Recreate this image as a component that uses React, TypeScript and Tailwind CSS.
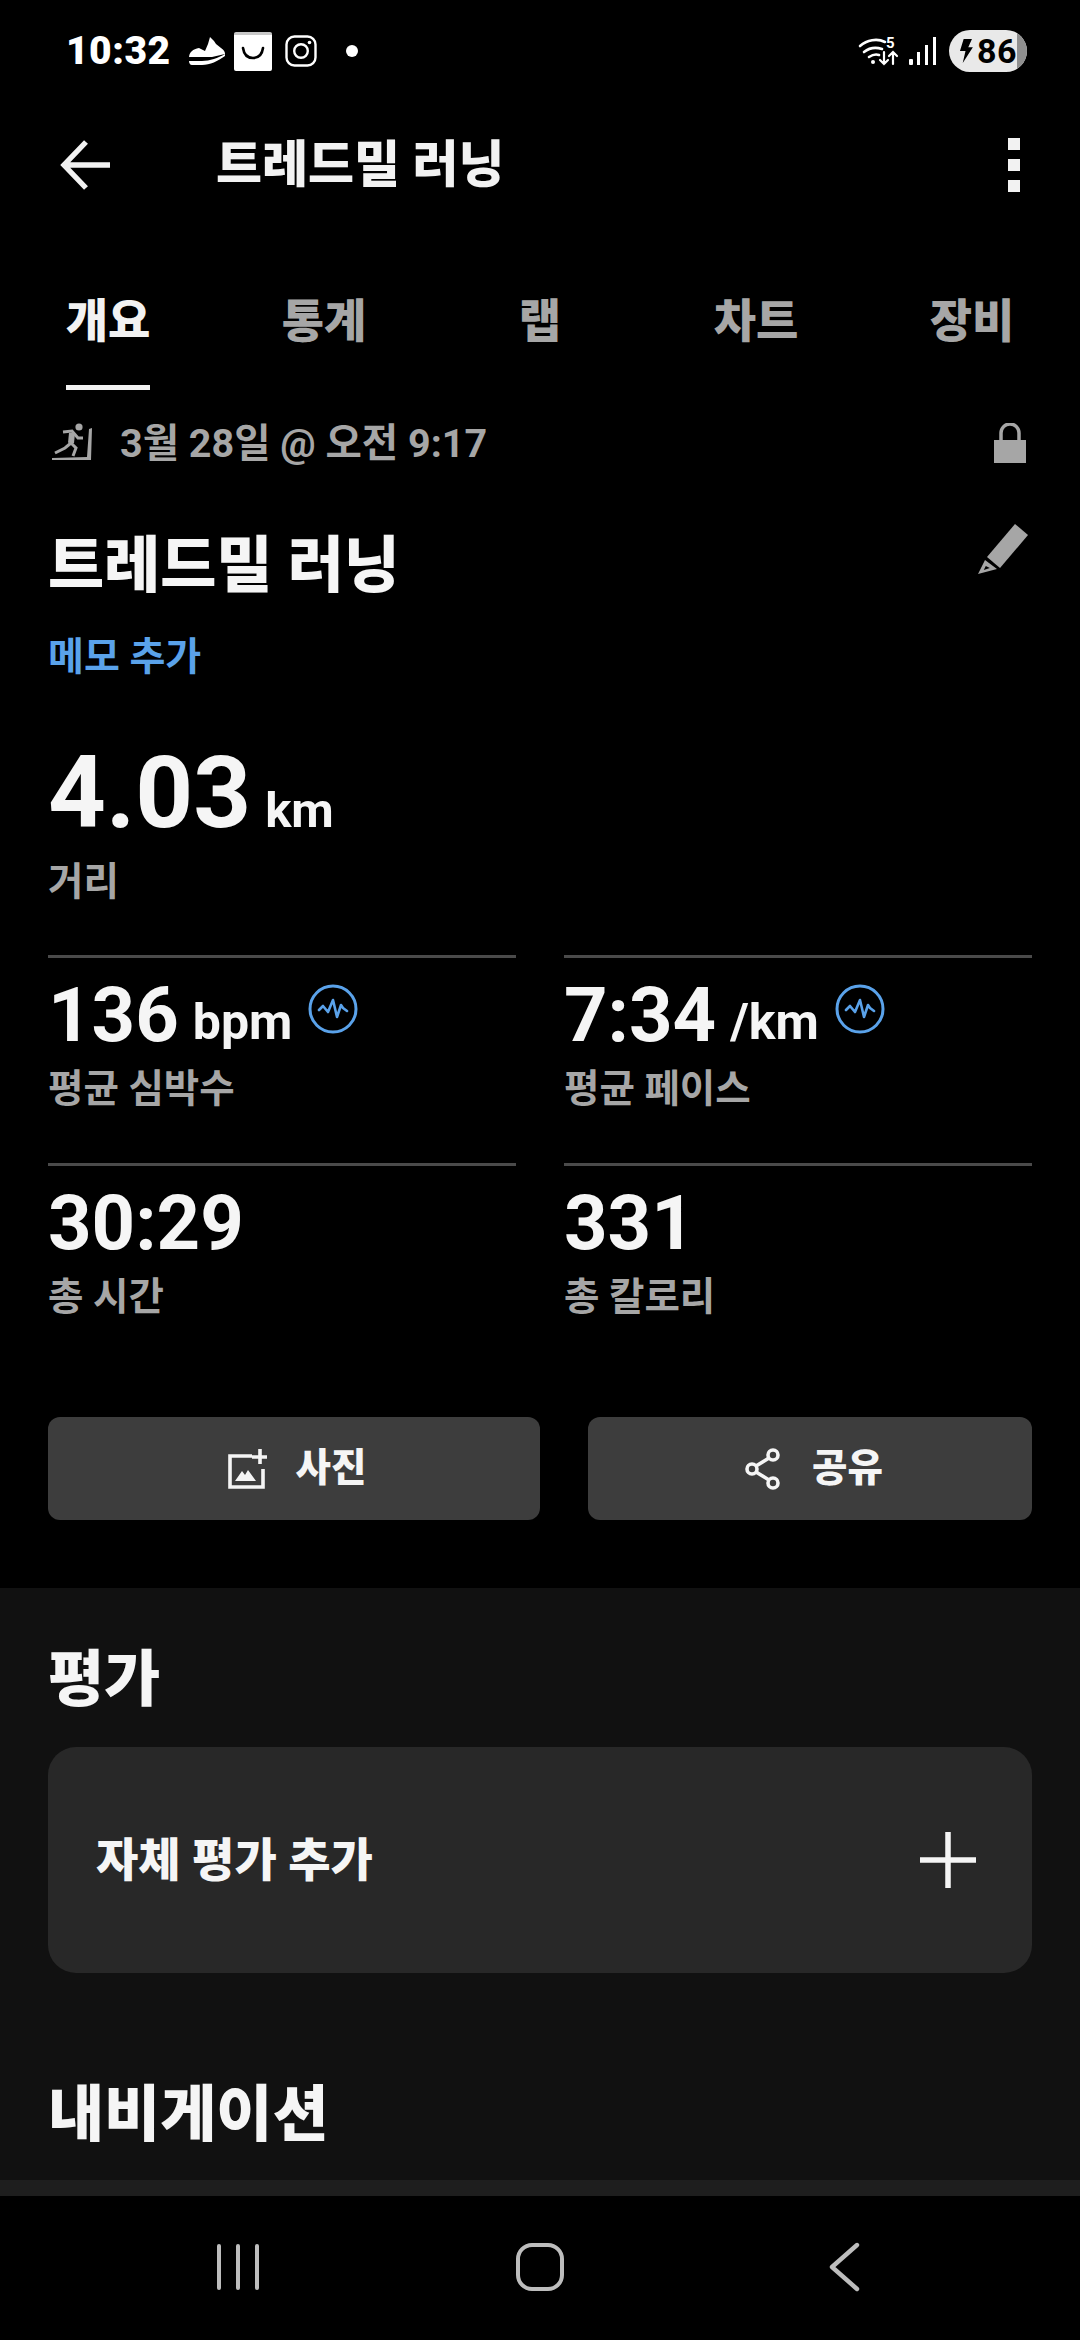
const PulseBadge = () => (
  <svg viewBox="0 0 50 50" className="w-[50px] h-[50px] ml-4 mt-[-12px] shrink-0" fill="none" stroke="#5aa2ea">
    <circle cx="25" cy="25" r="23" strokeWidth="3" />
    <path d="M11 26l4-4 5 6 5-12 4 17 4-12 2 3 4 3" strokeWidth="2.6" strokeLinejoin="round" strokeLinecap="round" />
  </svg>
);

function StatusBar() {
  return (
    <div className="h-[102px] shrink-0 flex items-center justify-between pl-[66px] pr-[53px]">
      <div className="flex items-center">
        <span className="w-[104px] text-[39px] font-black text-white leading-none tracking-[0.5px]">10:32</span>
        <svg viewBox="0 0 38 32" className="w-[38px] h-[32px] ml-[18px]" fill="#fff">
          <path d="M1 23C1 17 5 14 11 13l6 3 3-7 2-7 4 4 2 3 5 4c3 2 4 4 4 6l-13 3H1z" />
          <path d="M1 26h13c8 0 16-3 23-7v2c-7 5-15 9-23 9H4c-2 0-3-2-3-4z" />
        </svg>
        <div className="w-[38px] h-[39px] ml-2 bg-white rounded-[2px] border-t-[3px] border-[#c8c8c8]">
          <svg viewBox="0 0 38 36" className="w-[38px] h-[36px]" fill="none" stroke="#000" strokeWidth="2.6" strokeLinecap="round">
            <path d="M9 13c1 7 5 10 10 10s9-3 10-10" />
          </svg>
        </div>
        <svg viewBox="0 0 32 32" className="w-[32px] h-[32px] ml-[13px]" fill="none" stroke="#fff" strokeWidth="2.4">
          <rect x="1.5" y="1.5" width="29" height="29" rx="8" />
          <circle cx="16" cy="16" r="6.8" />
          <circle cx="24.5" cy="7.5" r="1.8" fill="#fff" stroke="none" />
        </svg>
        <span className="w-3 h-3 rounded-full bg-white ml-[29px]" />
      </div>
      <div className="flex items-center">
        <div className="relative w-[44px] h-[30px]">
          <svg viewBox="0 0 44 30" className="w-[44px] h-[30px]" fill="none" stroke="#fff" strokeWidth="2.6" strokeLinecap="round">
            <path d="M2 10c7-6 17-8 25-4M6 16c5-4 12-5 18-3M11 21c3-2 7-3 10-2" />
            <circle cx="15" cy="26" r="2" fill="#fff" stroke="none" />
            <path d="M26 16v12m-4-4l4 4 4-4M35 28V16m-4 4l4-4 4 4" strokeWidth="2.2" />
          </svg>
          <span className="absolute left-[28px] top-[0px] text-[15px] leading-[14px] font-bold text-white">5</span>
        </div>
        <svg viewBox="0 0 28 28" className="w-[28px] h-[28px] ml-[7px]" fill="#fff">
          <rect x="0" y="22" width="4" height="6" rx="1" />
          <rect x="8" y="15" width="3" height="13" />
          <rect x="16" y="8" width="3" height="20" />
          <rect x="24" y="0" width="3" height="28" />
        </svg>
        <div className="relative w-[78px] h-[42px] ml-[12px] rounded-full overflow-hidden bg-[#e9e9e9] flex items-center pl-[9px]">
          <svg viewBox="0 0 16 26" className="w-[15px] h-[24px] shrink-0" fill="#000">
            <path d="M6 0h9l-4 9h5L5 26l3-13H2z" />
          </svg>
          <span className="ml-[4px] text-[34px] leading-none font-bold text-black tracking-[0.5px]">86</span>
          <div className="absolute right-0 top-0 bottom-0 w-[10px] bg-[#8f8f8f]" />
        </div>
      </div>
    </div>
  );
}

function Header() {
  return (
    <div className="h-[126px] shrink-0 flex items-center pl-[60px] pr-[60px]">
      <svg viewBox="0 0 50 50" className="w-[50px] h-[50px] shrink-0" fill="none" stroke="#f2f2f2" strokeWidth="5.4">
        <path d="M50 25H4M26 2L4 25l22 23" />
      </svg>
      <span className="ml-[106px] text-[50px] font-black text-[#f2f2f2] leading-none">트레드밀 러닝</span>
      <div className="ml-auto flex flex-col gap-[9px]">
        <span className="w-3 h-3 bg-[#f2f2f2]" />
        <span className="w-3 h-3 bg-[#f2f2f2]" />
        <span className="w-3 h-3 bg-[#f2f2f2]" />
      </div>
    </div>
  );
}

function Tabs() {
  const tabs = ['개요', '통계', '랩', '차트', '장비'];
  return (
    <div className="h-[162px] shrink-0 grid grid-cols-5">
      {tabs.map((t, i) => (
        <div key={t} className="flex flex-col items-center justify-end">
          <span className={`text-[46px] font-black leading-none mb-[41px] ${i === 0 ? 'text-[#f2f2f2]' : 'text-[#a6a6a6]'}`}>{t}</span>
          <div className={`w-[84px] h-[5px] ${i === 0 ? 'bg-[#f2f2f2]' : ''}`} />
        </div>
      ))}
    </div>
  );
}

function Stat({ value, unit, label, pulse }: { value: string; unit?: string; label: string; pulse?: boolean }) {
  return (
    <div className="border-t-[3px] border-[#4a4a4a] pt-[17px] h-[208px]">
      <div className="flex items-center h-[80px]">
        <span className="text-[76px] font-bold text-[#f5f5f5] leading-none">{value}</span>
        {unit && <span className="ml-[14px] mt-[14px] text-[50px] font-bold text-[#f5f5f5] leading-none">{unit}</span>}
        {pulse && <PulseBadge />}
      </div>
      <div className="mt-[11px] text-[38.5px] font-bold text-[#a6a6a6] leading-[46px]">{label}</div>
    </div>
  );
}

function Summary() {
  return (
    <div className="h-[1198px] shrink-0 px-[48px]">
      <div className="h-[106px] flex items-center">
        <svg viewBox="0 0 40 40" className="w-[40px] h-[40px] ml-[4px] shrink-0" fill="#a6a6a6" stroke="#a6a6a6">
          <circle cx="27" cy="4" r="3.6" stroke="none" />
          <path d="M20 10l-1 10" strokeWidth="6" />
          <path d="M11 9l9-1 6 7 5 0M19 20l-6 5-10 5M19 20l5 5-3 8" fill="none" strokeWidth="3" />
          <path d="M0 35l35-1 2-28 3-1-1 32H0z" stroke="none" />
        </svg>
        <span className="ml-[28px] pt-[2px] text-[39.5px] font-bold text-[#a6a6a6] leading-none">3월 28일 @ 오전 9:17</span>
        <svg viewBox="0 0 32 40" className="ml-auto mr-[6px] w-[32px] h-[40px] shrink-0" fill="#a6a6a6">
          <path d="M0 17h32v23H0z" />
          <path d="M7 17V10a9 9 0 0118 0v7" fill="none" stroke="#a6a6a6" strokeWidth="3.5" />
        </svg>
      </div>
      <div className="h-[128px] flex items-center justify-between">
        <span className="pt-[12px] text-[61px] font-black text-[#f5f5f5] leading-none">트레드밀 러닝</span>
        <svg viewBox="0 0 50 50" className="w-[50px] h-[50px] mr-[4px] mb-[22px] shrink-0" fill="#a6a6a6">
          <path d="M37 0l13 11-28 33L9 33z" />
          <path d="M7 36l12 9-19 5 7-14zm.8 6l-2 4 6-2z" />
        </svg>
      </div>
      <div className="mt-[10px] text-[39px] font-bold text-[#5aa2ea] leading-[46px]">메모 추가</div>
      <div className="mt-[59px] flex items-baseline h-[108px]">
        <span className="text-[101px] font-bold text-[#f5f5f5] leading-[108px]">4.03</span>
        <span className="ml-[14px] text-[49px] font-bold text-[#f5f5f5] leading-none">km</span>
      </div>
      <div className="mt-[12px] text-[38.5px] font-bold text-[#a6a6a6] leading-[46px]">거리</div>
      <div className="mt-[50px] grid grid-cols-2 gap-x-[48px]">
        <Stat value="136" unit="bpm" label="평균 심박수" pulse />
        <Stat value="7:34" unit="/km" label="평균 페이스" pulse />
        <Stat value="30:29" label="총 시간" />
        <Stat value="331" label="총 칼로리" />
      </div>
      <div className="mt-[46px] flex gap-[48px]">
        <button className="w-[492px] h-[103px] rounded-[12px] bg-[#3d3d3d] flex items-center justify-center pl-[6px]">
          <svg viewBox="0 0 40 40" className="w-[40px] h-[40px] shrink-0" fill="none" stroke="#f5f5f5" strokeWidth="3.6">
            <path d="M24 7H2v31h33V20" />
            <path d="M32 0v15M24 8h15" />
            <path d="M7 32l7-10 3 4 3-5 8 11z" fill="#f5f5f5" stroke="none" />
          </svg>
          <span className="ml-[28px] text-[38.5px] font-black text-[#f5f5f5] leading-none">사진</span>
        </button>
        <button className="w-[444px] h-[103px] rounded-[12px] bg-[#3d3d3d] flex items-center justify-center pl-[8px]">
          <svg viewBox="0 0 36 42" className="w-[36px] h-[42px] shrink-0" fill="none" stroke="#f5f5f5" strokeWidth="3.6">
            <circle cx="28" cy="7" r="5" />
            <circle cx="7" cy="21" r="5" />
            <circle cx="28" cy="35" r="5" />
            <path d="M24 10L11 18M11 24l13 8" />
          </svg>
          <span className="ml-[31px] text-[38.5px] font-black text-[#f5f5f5] leading-none">공유</span>
        </button>
      </div>
    </div>
  );
}

function Sections() {
  return (
    <div className="flex-1 bg-[#111111] px-[48px] overflow-hidden">
      <div className="mt-[63px] text-[61px] font-black text-[#f5f5f5] leading-[58px]">평가</div>
      <div className="mt-[38px] h-[226px] rounded-[28px] bg-[#282828] flex items-center justify-between pl-[48px] pr-[56px]">
        <span className="text-[46px] font-black text-[#f5f5f5] leading-none">자체 평가 추가</span>
        <svg viewBox="0 0 56 56" className="w-[56px] h-[56px] shrink-0" fill="none" stroke="#f5f5f5" strokeWidth="5.5">
          <path d="M28 0v56M0 28h56" />
        </svg>
      </div>
      <div className="mt-[113px] text-[61px] font-black text-[#f5f5f5] leading-[58px]">내비게이션</div>
    </div>
  );
}

function NavBar() {
  return (
    <div className="h-[144px] shrink-0 bg-black flex items-center justify-center pb-[2px] pr-[3px]">
      <div className="flex items-center">
        <div className="w-[42px] flex justify-between">
          <span className="w-[4px] h-[46px] rounded-full bg-[#bdbdbd]" />
          <span className="w-[4px] h-[46px] rounded-full bg-[#bdbdbd]" />
          <span className="w-[4px] h-[46px] rounded-full bg-[#bdbdbd]" />
        </div>
        <div className="ml-[257px] w-[48px] h-[48px] rounded-[16px] border-[4px] border-[#bdbdbd]" />
        <svg viewBox="0 0 32 50" className="ml-[264px] w-[32px] h-[50px]" fill="none" stroke="#bdbdbd" strokeWidth="4.4" strokeLinecap="round" strokeLinejoin="round">
          <path d="M29 3L4 25l25 22" />
        </svg>
      </div>
    </div>
  );
}

export default function App() {
  return (
    <div className="w-[1080px] h-[2340px] bg-black overflow-hidden flex flex-col font-['Roboto','Noto_Sans_CJK_KR',sans-serif]">
      <StatusBar />
      <Header />
      <Tabs />
      <Summary />
      <Sections />
      <div className="h-[16px] shrink-0 bg-[#1e1e1e]" />
      <NavBar />
    </div>
  );
}
